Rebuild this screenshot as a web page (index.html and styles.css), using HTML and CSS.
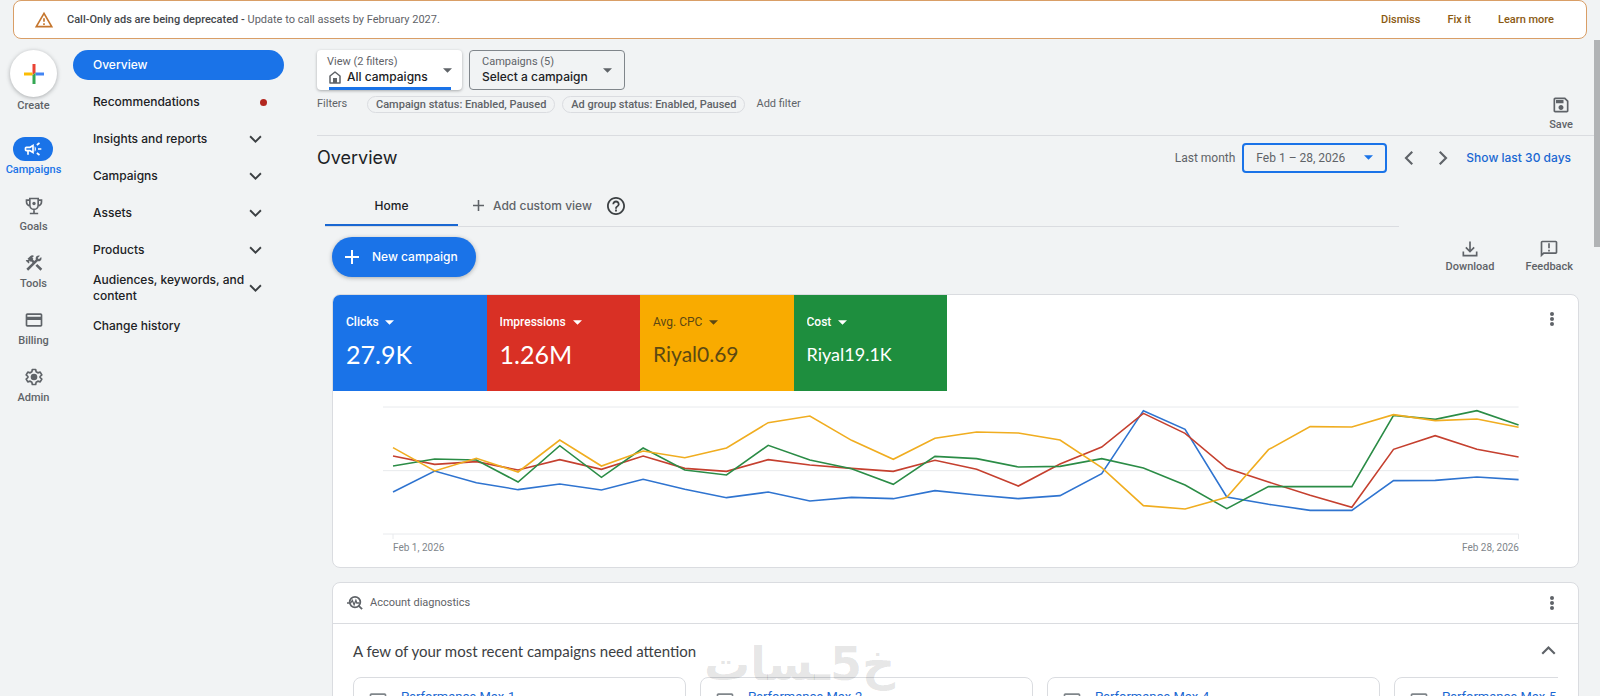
FILE: index.html
```html
<!DOCTYPE html>
<html lang="en">
<head>
	<meta charset="UTF-8">
	<meta name="viewport" content="width=device-width, initial-scale=1" />
	<title>Overview - Campaigns</title>
	<link rel="stylesheet" href="styles.css">
</head>
<body>

<svg class="symbols" aria-hidden="true">
	<symbol id="caret" viewBox="0 0 8 4"><path d="M0 0h8L4 4z"/></symbol>
	<symbol id="chevron" viewBox="0 0 12 8"><path d="M1 1l5 5 5-5" fill="none" stroke="currentColor" stroke-width="1.700"/></symbol>
	<symbol id="plus" viewBox="0 0 14 14"><path d="M6 0h2v6h6v2H8v6H6V8H0V6h6z"/></symbol>
	<symbol id="dots" viewBox="0 0 4 14"><circle cx="2" cy="2" r="2"/><circle cx="2" cy="7" r="2"/><circle cx="2" cy="12" r="2"/></symbol>
	<symbol id="card" viewBox="0 0 24 24"><path d="M20 4H4c-1.110 0-1.990.89-1.990 2L2 18c0 1.110.89 2 2 2h16c1.110 0 2-.89 2-2V6c0-1.110-.89-2-2-2zm0 14H4v-6h16v6zm0-10H4V6h16v2z"/></symbol>
</svg>

<div class="banner">
	<svg class="icon" viewBox="0 0 24 24"><path d="M12 5.990 19.530 19H4.470L12 5.990M12 2 1 21h22L12 2zm1 14h-2v2h2v-2zm0-6h-2v4h2v-4z"/></svg>
	<p><strong>Call-Only ads are being deprecated - </strong>Update to call assets by February 2027.</p>
	<button type="button">Dismiss</button>
	<button type="button">Fix it</button>
	<a href="#">Learn more</a>
</div>

<div class="app">
	<nav class="rail" aria-label="Main">
		<button class="create" type="button">
			<span class="create-circle">
				<svg viewBox="0 0 20 20">
					<path fill="#ea4335" d="M8.500 0h3v8.500l-3 3z"/>
					<path fill="#fbbc04" d="M0 8.500h8.500v3H0z"/>
					<path fill="#4285f4" d="M11.500 8.500H20v3h-8.500z"/>
					<path fill="#34a853" d="M8.500 11.500l3-3V20h-3z"/>
				</svg>
			</span>
			Create
		</button>
		<a class="rail-item active" href="#">
			<span class="rail-icon"><svg class="icon" viewBox="0 0 24 24"><path d="M18 11v2h4v-2h-4zm-2 6.610c.96.71 2.210 1.650 3.200 2.390.4-.53.8-1.070 1.200-1.600-.99-.74-2.240-1.680-3.200-2.400-.4.54-.8 1.080-1.200 1.610zM20.400 5.600c-.4-.53-.8-1.070-1.200-1.600-.99.74-2.240 1.680-3.200 2.400.4.53.8 1.070 1.200 1.600.96-.72 2.210-1.650 3.200-2.400zM4 9c-1.100 0-2 .9-2 2v2c0 1.100.9 2 2 2h1v4h2v-4h1l5 3V6L8 9H4zm5.030 1.710L11 9.530v4.940l-1.970-1.180-.48-.29H4v-2h4.550l.48-.29zM15.500 12c0-1.330-.58-2.530-1.500-3.350v6.690c.92-.81 1.500-2.010 1.500-3.340z"/></svg></span>
			Campaigns
		</a>
		<a class="rail-item" href="#">
			<span class="rail-icon"><svg class="icon" viewBox="0 0 24 24">
				<path d="M7 3h10v8a5 5 0 0 1-10 0zM7 5H3v2c0 3 1.500 4.500 4.500 5M17 5h4v2c0 3-1.500 4.500-4.500 5M12 16v5M7 21h10" fill="none" stroke="currentColor" stroke-width="2"/>
				<circle cx="12" cy="9" r="2"/>
			</svg></span>
			Goals
		</a>
		<a class="rail-item" href="#">
			<span class="rail-icon"><svg class="icon" viewBox="0 0 24 24"><path d="M13.780 15.170l2.120-2.120 6 6-2.120 2.120zM17.500 10c1.930 0 3.500-1.570 3.500-3.500 0-.58-.16-1.120-.41-1.600l-2.700 2.700-1.490-1.490 2.700-2.700c-.48-.25-1.020-.41-1.600-.41C15.570 3 14 4.570 14 6.500c0 .41.08.8.21 1.160l-1.850 1.850-1.780-1.780.71-.71-1.410-1.410L12 3.490c-1.170-1.170-3.070-1.170-4.240 0L4.220 7.030l1.410 1.410H2.810l-.71.71 3.540 3.540.71-.71V9.150l1.410 1.410.71-.71 1.780 1.780-7.410 7.410 2.120 2.120L16.340 9.790c.36.13.75.21 1.160.21z"/></svg></span>
			Tools
		</a>
		<a class="rail-item" href="#">
			<span class="rail-icon"><svg class="icon"><use href="#card"/></svg></span>
			Billing
		</a>
		<a class="rail-item" href="#">
			<span class="rail-icon"><svg class="icon" viewBox="0 0 24 24">
				<path d="M10 3h4l.6 2.800 2 1.200 2.800-.9 2 3.400-2.100 1.900v1.200l2.100 1.900-2 3.400-2.800-.9-2 1.200L14 21h-4l-.6-2.800-2-1.200-2.800.9-2-3.400 2.100-1.900v-1.200L2.600 9.500l2-3.400 2.800.9 2-1.200z" fill="none" stroke="currentColor" stroke-width="2" stroke-linejoin="round"/>
				<circle cx="12" cy="12" r="4"/>
			</svg></span>
			Admin
		</a>
	</nav>

	<nav class="menu" aria-label="Campaigns">
		<a class="active" href="#">Overview</a>
		<a href="#">Recommendations <span class="alert"></span></a>
		<a href="#">Insights and reports <svg class="chevron"><use href="#chevron"/></svg></a>
		<a href="#">Campaigns <svg class="chevron"><use href="#chevron"/></svg></a>
		<a href="#">Assets <svg class="chevron"><use href="#chevron"/></svg></a>
		<a href="#">Products <svg class="chevron"><use href="#chevron"/></svg></a>
		<a href="#">Audiences, keywords, and content <svg class="chevron"><use href="#chevron"/></svg></a>
		<a href="#">Change history</a>
	</nav>

	<main>
		<header class="scope">
			<div class="pickers">
				<div class="picker picker-view">
					<div>
						<label for="view">View (2 filters)</label>
						<div class="picker-value">
							<svg viewBox="0 0 14 14"><path d="M2 13V6l5-4 5 4v7z" fill="none" stroke="currentColor" stroke-width="1.500" stroke-linejoin="round"/><path d="M5 8h4v5H5z"/></svg>
							<select id="view"><option>All campaigns</option></select>
						</div>
					</div>
					<svg class="caret"><use href="#caret"/></svg>
				</div>
				<div class="picker">
					<div>
						<label for="campaign">Campaigns (5)</label>
						<div class="picker-value">
							<select id="campaign"><option>Select a campaign</option></select>
						</div>
					</div>
					<svg class="caret"><use href="#caret"/></svg>
				</div>
			</div>
			<div class="filters">
				<span>Filters</span>
				<button class="chip" type="button">Campaign status: Enabled, Paused</button>
				<button class="chip" type="button">Ad group status: Enabled, Paused</button>
				<button class="add-filter" type="button">Add filter</button>
			</div>
			<button class="tool save" type="button">
				<svg class="icon" viewBox="0 0 24 24"><path d="M17 3H5c-1.110 0-2 .9-2 2v14c0 1.100.89 2 2 2h14c1.100 0 2-.9 2-2V7l-4-4zm2 16H5V5h11.170L19 7.830V19zm-7-7c-1.660 0-3 1.340-3 3s1.340 3 3 3 3-1.340 3-3-1.340-3-3-3zM6 6h9v4H6z"/></svg>
				Save
			</button>
		</header>

		<div class="title-row">
			<h1>Overview</h1>
			<label for="range">Last month</label>
			<div class="range">
				<select id="range"><option>Feb 1 – 28, 2026</option></select>
				<svg class="caret"><use href="#caret"/></svg>
			</div>
			<button class="step prev" type="button" aria-label="Previous period"><svg class="chevron"><use href="#chevron"/></svg></button>
			<button class="step next" type="button" aria-label="Next period"><svg class="chevron"><use href="#chevron"/></svg></button>
			<a href="#">Show last 30 days</a>
		</div>

		<div class="tabs">
			<a class="tab" href="#">Home</a>
			<button class="add-view" type="button"><svg><use href="#plus"/></svg> Add custom view</button>
			<button class="help" type="button" aria-label="Help"><svg viewBox="2 2 20 20"><path d="M11 18h2v-2h-2v2zm1-16C6.480 2 2 6.480 2 12s4.480 10 10 10 10-4.480 10-10S17.520 2 12 2zm0 18c-4.410 0-8-3.590-8-8s3.590-8 8-8 8 3.590 8 8-3.590 8-8 8zm0-14c-2.210 0-4 1.790-4 4h2c0-1.100.9-2 2-2s2 .9 2 2c0 2-3 1.750-3 5h2c0-2.250 3-2.500 3-5 0-2.210-1.790-4-4-4z"/></svg></button>
		</div>

		<div class="actions">
			<button class="new-campaign" type="button"><svg><use href="#plus"/></svg> New campaign</button>
			<button class="tool" type="button">
				<svg class="icon" viewBox="0 0 24 24"><path d="M20 15v5H4v-5M12 3v12M7 10l5 5 5-5" fill="none" stroke="currentColor" stroke-width="2"/></svg>
				Download
			</button>
			<button class="tool" type="button">
				<svg class="icon" viewBox="0 0 24 24"><path d="M20 2H4c-1.100 0-1.990.9-1.990 2L2 22l4-4h14c1.100 0 2-.9 2-2V4c0-1.100-.9-2-2-2zm0 14H5.170L4 17.170V4h16v12zM11 5h2v6h-2zm0 8h2v2h-2z"/></svg>
				Feedback
			</button>
		</div>

		<section class="panel">
			<div class="panel-top">
				<div class="metrics">
					<div class="metric blue">
						<div class="metric-name"><select aria-label="Metric 1"><option>Clicks</option></select><svg class="caret"><use href="#caret"/></svg></div>
						<div class="metric-value">27.9K</div>
					</div>
					<div class="metric red">
						<div class="metric-name"><select aria-label="Metric 2"><option>Impressions</option></select><svg class="caret"><use href="#caret"/></svg></div>
						<div class="metric-value">1.26M</div>
					</div>
					<div class="metric yellow">
						<div class="metric-name"><select aria-label="Metric 3"><option>Avg. CPC</option></select><svg class="caret"><use href="#caret"/></svg></div>
						<div class="metric-value medium">Riyal0.69</div>
					</div>
					<div class="metric green">
						<div class="metric-name"><select aria-label="Metric 4"><option>Cost</option></select><svg class="caret"><use href="#caret"/></svg></div>
						<div class="metric-value small">Riyal19.1K</div>
					</div>
				</div>
				<button class="more" type="button" aria-label="More options"><svg><use href="#dots"/></svg></button>
			</div>
			<div class="chart">
				<!-- one x unit per day -->
				<svg viewBox="-0.24 0 27.25 420" preserveAspectRatio="none">
					<path class="grid" d="M-0.240 21H27M-0.240 212H27M-0.240 402H27M0 402V417M27 402V417"/>
					<polyline class="line-blue" points="0,276 1,213 2,248 3,269 4,252 5,270 6,238 7,268 8,293 9,276 10,303 11,292 12,296 13,272 14,285 15,296 16,287 17,221 18,32 19,88 20,291 21,313 22,331 23,331 24,242 25,241 26,231 27,239"/>
					<polyline class="line-red" points="0,168 1,193 2,185 3,210 4,179 5,208 6,168 7,205 8,214 9,179 10,195 11,205 12,214 13,181 14,208 15,258 16,192 17,141 18,40 19,100 20,205 21,246 22,286 23,322 24,148 25,107 26,148 27,171"/>
					<polyline class="line-green" points="0,198 1,177 2,180 3,246 4,137 5,232 6,144 7,210 8,225 9,136 10,180 11,206 12,253 13,169 14,176 15,201 16,199 17,176 18,204 19,255 20,326 21,260 22,260 23,260 24,46 25,58 26,32 27,75"/>
					<polyline class="line-yellow" points="0,143 1,213 2,175 3,216 4,120 5,198 6,153 7,173 8,144 9,68 10,48 11,121 12,178 13,115 14,96 15,99 16,120 17,203 18,317 19,327 20,292 21,149 22,80 23,81 24,44 25,62 26,57 27,82"/>
				</svg>
				<div class="axis"><span>Feb 1, 2026</span><span>Feb 28, 2026</span></div>
			</div>
		</section>

		<section class="panel">
			<div class="panel-head">
				<svg viewBox="0 0 18 18"><g fill="none" stroke="currentColor" stroke-width="2"><circle cx="9" cy="8" r="6"/><path d="M13 12l4 4"/><path d="M0 9h4l2-3 2 5 2-5 1 3h3" stroke-width="1.500"/></g></svg>
				<span>Account diagnostics</span>
				<button class="more" type="button" aria-label="More options"><svg><use href="#dots"/></svg></button>
			</div>
			<div class="panel-title">
				<h2>A few of your most recent campaigns need attention</h2>
				<button type="button" aria-label="Collapse"><svg class="chevron up"><use href="#chevron"/></svg></button>
			</div>
			<div class="campaigns">
				<article><svg class="icon"><use href="#card"/></svg><a href="#">Performance Max-1</a></article>
				<article><svg class="icon"><use href="#card"/></svg><a href="#">Performance Max-2</a></article>
				<article><svg class="icon"><use href="#card"/></svg><a href="#">Performance Max-4</a></article>
				<article><svg class="icon"><use href="#card"/></svg><a href="#">Performance Max-5</a></article>
			</div>
		</section>
	</main>
</div>

<div class="scroll-thumb"></div>
<div class="watermark" lang="ar" dir="rtl">خ5ـسات</div>

</body>
</html>
```

FILE: styles.css
```css
* {
	box-sizing: border-box;
}
body {
	display: flex;
	flex-direction: column;
	height: 100vh;
	margin: 0;
	overflow: hidden;
	background: #f1f3f4;
	color: #5f6368;
	font: 12px/16px Roboto, sans-serif;
}
button, select {
	margin: 0;
	padding: 0;
	border: 0;
	background: none;
	color: inherit;
	font: inherit;
	appearance: none;
}
a {
	color: inherit;
	text-decoration: none;
}
h1, h2, p {
	margin: 0;
	font-weight: 400;
}
svg {
	flex: none;
	fill: currentColor;
}
.symbols {
	position: absolute;
	width: 0;
	height: 0;
}
.icon {
	width: 20px;
	height: 20px;
}
.caret {
	width: 9px;
	height: 5px;
}
.chevron {
	width: 13px;
	height: 9px;
}

.banner {
	display: flex;
	flex: none;
	align-items: center;
	gap: 27px;
	height: 39px;
	margin: 0 13px;
	padding: 0 32px 0 20px;
	border: 1px solid #d99e66;
	border-radius: 8px;
	background: #fff;
	color: #8a5a12;
	font-size: 11px;
	font-weight: 500;
}
.banner .icon {
	color: #c5762e;
}
.banner p {
	flex: 1;
	margin-left: -14px;
	color: #5f6368;
	font-weight: 400;
}
.banner strong {
	color: #44474b;
	font-weight: 500;
}

.app {
	display: flex;
	flex: 1;
	min-height: 0;
	padding-top: 11px;
}

.rail {
	display: flex;
	flex: none;
	flex-direction: column;
	align-items: center;
	gap: 16px;
	width: 67px;
	font-size: 11px;
	font-weight: 500;
}
.create {
	display: flex;
	flex-direction: column;
	align-items: center;
	height: 71px;
}
.create-circle {
	display: grid;
	place-items: center;
	width: 47px;
	height: 47px;
	margin-bottom: 1px;
	border-radius: 50%;
	background: #fff;
	box-shadow: 0 1px 4px rgba(60, 64, 67, 0.4);
}
.create-circle svg {
	width: 20px;
	height: 20px;
}
.rail-item {
	display: flex;
	flex-direction: column;
	align-items: center;
	height: 41px;
}
.rail-icon {
	display: grid;
	flex: none;
	place-items: center;
	width: 40px;
	height: 24px;
	margin-bottom: 1px;
	border-radius: 12px;
}
.rail-item.active {
	color: #1a73e8;
}
.active .rail-icon {
	background: #1a73e8;
	color: #fff;
}

.menu {
	display: flex;
	flex: none;
	flex-direction: column;
	gap: 7px;
	width: 211px;
	margin-left: 6px;
	color: #202124;
	font: 500 12px/16px Inter, sans-serif;
}
.menu a {
	display: flex;
	align-items: center;
	justify-content: space-between;
	min-height: 30px;
	padding: 0 22px 0 20px;
	border-radius: 15px;
}
.menu .active {
	background: #1a73e8;
	color: #fff;
}
.menu .chevron {
	color: #3c4043;
}
.alert {
	width: 7px;
	height: 7px;
	margin-right: -5px;
	border-radius: 50%;
	background: #b3261e;
}

main {
	flex: 1;
	min-width: 0;
	margin-left: 33px;
}
.scope {
	display: grid;
	grid-template-rows: 40px 1fr;
	grid-template-columns: 1fr auto;
	height: 86px;
	margin-right: 6px;
	padding-right: 21px;
	border-bottom: 1px solid #dadce0;
}
.pickers {
	display: flex;
	grid-column: 1 / 3;
	gap: 7px;
}
.picker {
	display: flex;
	align-items: center;
	justify-content: space-between;
	width: 156px;
	padding: 0 12px;
	border: 1px solid #80868b;
	border-radius: 4px;
	font-size: 11px;
	line-height: 14px;
}
.picker label {
	display: block;
}
.picker-view {
	width: 145px;
	padding: 0 10px;
	border: 0;
	background: linear-gradient(#1a73e8, #1a73e8) 12px 100% / 122px 3px no-repeat #fff;
	box-shadow: 0 1px 3px rgba(60, 64, 67, 0.4);
}
.picker-value {
	display: flex;
	align-items: center;
	gap: 5px;
}
.picker-value svg {
	width: 14px;
	height: 14px;
	margin-left: 1px;
}
.picker-value select {
	color: #202124;
	font: 500 12px/16px Inter, sans-serif;
}
.filters {
	display: flex;
	align-items: center;
	gap: 7px;
	height: 30px;
	padding-bottom: 2px;
	font-size: 11px;
}
.filters span {
	width: 43px;
}
.chip {
	height: 17px;
	padding: 0 8px;
	border: 1px solid #dadce0;
	border-radius: 9px;
	font-weight: 500;
	line-height: 15px;
}
.add-filter {
	margin-left: 4px;
}
.tool {
	display: flex;
	flex-direction: column;
	align-items: center;
	font-size: 11px;
	font-weight: 500;
}
.save {
	gap: 2px;
	align-self: end;
	margin-bottom: 2px;
}

.title-row {
	display: flex;
	align-items: center;
	height: 43px;
	margin-right: 29px;
}
h1 {
	flex: 1;
	color: #202124;
	font: 400 18px/24px Inter, sans-serif;
}
.range {
	display: flex;
	align-items: center;
	justify-content: space-between;
	width: 145px;
	height: 30px;
	margin: 0 14px 0 7px;
	padding: 0 12px;
	border: 2px solid #1a73e8;
	border-radius: 4px;
}
.range .caret {
	color: #1a73e8;
}
.step {
	display: grid;
	place-items: center;
	width: 12px;
	height: 24px;
	margin-right: 23px;
}
.step .chevron {
	width: 15px;
	height: 10px;
}
.step.next {
	margin-right: 18px;
}
.prev .chevron {
	transform: rotate(90deg);
}
.next .chevron {
	transform: rotate(-90deg);
}
.title-row a {
	color: #1967d2;
	font: 500 12px/16px Inter, sans-serif;
}

.tabs {
	display: flex;
	align-items: center;
	height: 48px;
	margin: 0 201px 0 8px;
	border-bottom: 1px solid #dadce0;
	font: 500 12px/16px Inter, sans-serif;
}
.tab {
	align-self: stretch;
	width: 133px;
	padding-top: 19px;
	border-bottom: 2px solid #1967d2;
	color: #202124;
	text-align: center;
}
.add-view {
	display: flex;
	align-items: center;
	gap: 9px;
	margin: 6px 15px 0 15px;
}
.add-view svg {
	width: 11px;
	height: 11px;
}
.help {
	margin-top: 6px;
	color: #3c4043;
}
.help svg {
	display: block;
	width: 18px;
	height: 18px;
}

.actions {
	display: flex;
	align-items: center;
	gap: 31px;
	height: 67px;
	margin: 0 27px 0 15px;
	padding-bottom: 7px;
}
.new-campaign {
	display: flex;
	align-items: center;
	gap: 13px;
	height: 40px;
	margin-right: auto;
	padding: 0 18px 0 13px;
	border-radius: 20px;
	background: #1a73e8;
	box-shadow: 0 1px 4px rgba(60, 64, 67, 0.4);
	color: #fff;
	font: 500 12px/16px Inter, sans-serif;
}
.new-campaign svg {
	width: 14px;
	height: 14px;
}

.panel {
	margin: 0 21px 14px 15px;
	overflow: hidden;
	border: 1px solid #dadce0;
	border-radius: 8px;
	background: #fff;
}
.panel-top {
	display: flex;
	justify-content: space-between;
	padding-right: 20px;
}
.metrics {
	display: flex;
	width: 614px;
}
.metric {
	flex: 1;
	height: 96px;
	padding: 19px 13px 0;
	color: #fff;
}
.metric-name {
	display: flex;
	align-items: center;
	gap: 6px;
	font-weight: 500;
}
.metric-value {
	margin-top: 8px;
	font: 400 25px/32px Lato, sans-serif;
}
.metric-value.medium {
	font-size: 21px;
}
.metric-value.small {
	font-size: 18px;
}
.blue {
	background: #1a73e8;
}
.red {
	background: #d93025;
}
.yellow {
	background: #f9ab00;
	color: #5c4813;
}
.yellow .metric-name {
	font-weight: 400;
}
.green {
	background: #1e8e3e;
}
.more {
	width: 12px;
	height: 20px;
}
.more svg {
	display: block;
	width: 4px;
	height: 14px;
	margin: auto;
}
.panel-top .more {
	margin-top: 14px;
}

.chart {
	padding: 9px 59px 11px 50px;
}
.chart svg {
	display: block;
	width: 100%;
	height: 140px;
}
.chart path, .chart polyline {
	fill: none;
	stroke-width: 1.6;
	vector-effect: non-scaling-stroke;
}
.chart .grid {
	stroke: #e8eaed;
	stroke-width: 1;
}
.line-blue {
	stroke: #2f74d0;
}
.line-red {
	stroke: #c5402f;
}
.line-green {
	stroke: #2b8c46;
}
.line-yellow {
	stroke: #f0ad20;
}
.axis {
	display: flex;
	justify-content: space-between;
	padding-left: 10px;
	color: #80868b;
	font-size: 10px;
}

.panel-head {
	display: flex;
	align-items: center;
	gap: 7px;
	height: 41px;
	padding: 0 20px 0 14px;
	border-bottom: 1px solid #dadce0;
	font-size: 11px;
}
.panel-head > svg {
	width: 16px;
	height: 16px;
}
.panel-head .more {
	height: 14px;
	margin-left: auto;
}
.panel-title {
	display: flex;
	align-items: center;
	justify-content: space-between;
	height: 53px;
	padding: 0 22px 0 20px;
}
h2 {
	color: #3c4043;
	font: 400 15px/20px Lato, sans-serif;
}
.chevron.up {
	width: 15px;
	height: 10px;
	transform: rotate(180deg);
}
.campaigns {
	display: flex;
	gap: 14px;
	margin: 0 20px;
	overflow: hidden;
}
.campaigns article {
	display: flex;
	flex: none;
	gap: 13px;
	width: 333px;
	height: 120px;
	padding: 9px 14px;
	border: 1px solid #dadce0;
	border-radius: 8px;
	color: #1967d2;
	font-size: 13px;
	line-height: 20px;
}
.campaigns .icon {
	margin-top: 3px;
	color: #80868b;
}

.scroll-thumb {
	position: absolute;
	top: 40px;
	right: 0;
	width: 6px;
	height: 207px;
	background: #b1b3b5;
}
/* translucent brand mark over the page */
.watermark {
	position: absolute;
	bottom: 9px;
	left: 704px;
	color: rgba(0, 0, 0, 0.11);
	font: 700 46px/46px "DejaVu Sans", sans-serif;
}
```
